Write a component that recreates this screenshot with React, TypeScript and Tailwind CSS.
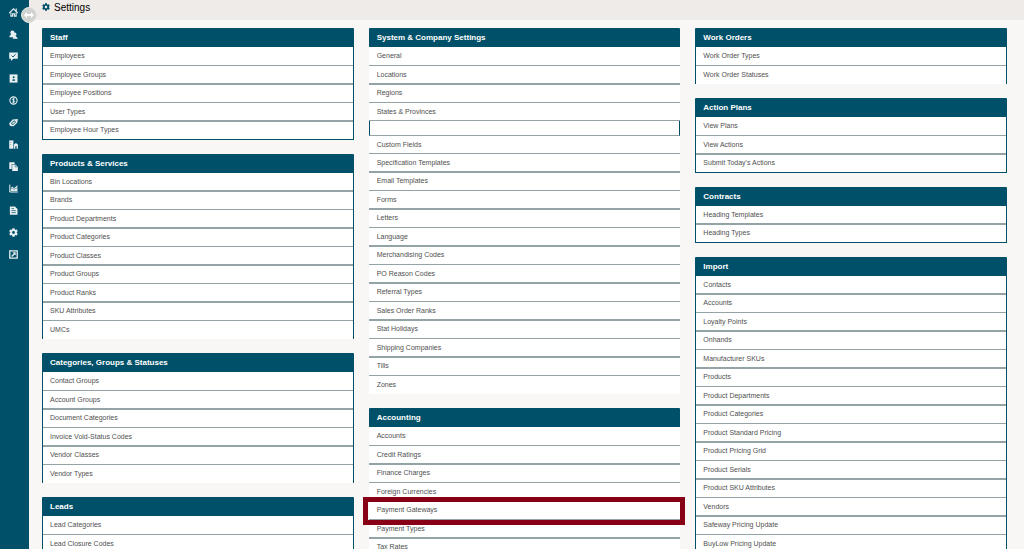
import React from 'react'
import { clsx } from 'clsx'
import { FaCog } from 'react-icons/fa'

interface Group {
  title: string
  items: string[]
  // first separator is the thick one
  thickFirst?: boolean
  sides?: boolean
  closed?: boolean
}

const staff: Group = {
  title: 'Staff',
  items: ['Employees', 'Employee Groups', 'Employee Positions', 'User Types', 'Employee Hour Types'],
  sides: true,
  closed: true,
}

const products: Group = {
  title: 'Products & Services',
  items: [
    'Bin Locations',
    'Brands',
    'Product Departments',
    'Product Categories',
    'Product Classes',
    'Product Groups',
    'Product Ranks',
    'SKU Attributes',
    'UMCs',
  ],
  thickFirst: true,
  sides: true,
}

const categories: Group = {
  title: 'Categories, Groups & Statuses',
  items: [
    'Contact Groups',
    'Account Groups',
    'Document Categories',
    'Invoice Void-Status Codes',
    'Vendor Classes',
    'Vendor Types',
  ],
  sides: true,
}

const leads: Group = {
  title: 'Leads',
  items: ['Lead Categories', 'Lead Closure Codes'],
  sides: true,
}

// the empty entry is a spacer row
const system: Group = {
  title: 'System & Company Settings',
  items: [
    'General',
    'Locations',
    'Regions',
    'States & Provinces',
    '',
    'Custom Fields',
    'Specification Templates',
    'Email Templates',
    'Forms',
    'Letters',
    'Language',
    'Merchandising Codes',
    'PO Reason Codes',
    'Referral Types',
    'Sales Order Ranks',
    'Stat Holidays',
    'Shipping Companies',
    'Tills',
    'Zones',
  ],
}

const accounting: Group = {
  title: 'Accounting',
  items: [
    'Accounts',
    'Credit Ratings',
    'Finance Charges',
    'Foreign Currencies',
    'Payment Gateways',
    'Payment Types',
    'Tax Rates',
  ],
}

const workOrders: Group = {
  title: 'Work Orders',
  items: ['Work Order Types', 'Work Order Statuses'],
  sides: true,
}

const actionPlans: Group = {
  title: 'Action Plans',
  items: ['View Plans', 'View Actions', "Submit Today's Actions"],
  sides: true,
  closed: true,
}

const contracts: Group = {
  title: 'Contracts',
  items: ['Heading Templates', 'Heading Types'],
  thickFirst: true,
  sides: true,
  closed: true,
}

const imports: Group = {
  title: 'Import',
  items: [
    'Contacts',
    'Accounts',
    'Loyalty Points',
    'Onhands',
    'Manufacturer SKUs',
    'Products',
    'Product Departments',
    'Product Categories',
    'Product Standard Pricing',
    'Product Pricing Grid',
    'Product Serials',
    'Product SKU Attributes',
    'Vendors',
    'Safeway Pricing Update',
    'BuyLow Pricing Update',
  ],
  thickFirst: true,
  sides: true,
}

const columns: Group[][] = [
  [staff, products, categories, leads],
  [system, accounting],
  [workOrders, actionPlans, contracts, imports],
]

const highlighted = 'Payment Gateways'

const navItems: { label: string; icon: React.ReactNode }[] = [
  {
    label: 'Home',
    icon: (
      <>
        <path d="M0.3 5 L4.5 0.9 L8.7 5" fill="none" stroke="currentColor" strokeWidth="1.2" />
        <path d="M1.9 4.4 V8.1 H3.6 V5.8 H5.4 V8.1 H7.1 V4.4" fill="none" stroke="currentColor" strokeWidth="1.1" />
        <path d="M6.6 0.6h1.2v2.4h-1.2z" />
      </>
    ),
  },
  {
    label: 'Contacts',
    icon: (
      <>
        <circle cx="3.4" cy="2.4" r="2" />
        <path d="M0.3 7.2 C0.5 5.4 2 5.2 2.3 3.8 H4.6 C4.8 5.2 6 5.4 6 7.2Z" />
        <circle cx="5.8" cy="4.2" r="1.6" />
        <path d="M3.6 8.8 C3.8 7.2 4.8 7 5 5.4 H6.8 C7 7 8.6 7.2 8.9 8.8Z" />
      </>
    ),
  },
  {
    label: 'Messages',
    icon: (
      <>
        <path d="M0.2 0.4 H8.8 V6.8 H4.4 L2 9 V6.8 H0.2Z" />
        <path d="M2.6 3.6 L4 5 L6.6 2.2" fill="none" stroke="#005069" strokeWidth="0.9" />
      </>
    ),
  },
  {
    label: 'Directory',
    icon: (
      <>
        <path d="M0.6 0.4 H8.5 V8.6 H0.6Z" />
        <circle cx="4.7" cy="3.2" r="1" fill="#005069" />
        <path d="M3.3 6.8 V6 C3.3 5 6.1 5 6.1 6 V6.8Z" fill="#005069" />
      </>
    ),
  },
  {
    label: 'Sales',
    icon: (
      <>
        <circle cx="4.5" cy="4.5" r="3.6" fill="none" stroke="currentColor" strokeWidth="1.1" />
        <path
          d="M5.8 3.1 C5 2.3 3.3 2.6 3.4 3.6 C3.5 4.6 5.7 4.3 5.7 5.5 C5.7 6.5 3.8 6.7 3.1 5.8 M4.5 1.8 V7.2"
          fill="none"
          stroke="currentColor"
          strokeWidth="0.9"
        />
      </>
    ),
  },
  {
    label: 'Products',
    icon: (
      <>
        <path d="M0.1 5.4 L3.6 1.4 L8.9 0.9 L8.2 4.8 L4.6 8.3 L1.2 8Z" />
        <ellipse
          cx="4.5"
          cy="4.7"
          rx="2.2"
          ry="1.2"
          transform="rotate(-42 4.5 4.7)"
          fill="none"
          stroke="#005069"
          strokeWidth="0.8"
        />
      </>
    ),
  },
  {
    label: 'Companies',
    icon: (
      <>
        <path d="M0.2 0.4 H4.4 V8.7 H0.2Z" />
        <path d="M5 4.6 L6.9 3 L8.9 4.6 V8.7 H7.6 V6.3 H6.3 V8.7 H5Z" />
        <path d="M1.3 2h1v1h-1zM1.3 4h1v1h-1z" fill="#8fb0bb" />
      </>
    ),
  },
  {
    label: 'Documents',
    icon: (
      <>
        <path d="M0.3 0.3 H5.6 V2 H2.7 V7 H0.3Z" />
        <path d="M3.2 2.5 H6.3 L8.9 4.9 V8.9 H3.2Z" />
        <path d="M6.2 2.6 V5 H8.6" fill="none" stroke="#005069" strokeWidth="0.5" />
      </>
    ),
  },
  {
    label: 'Reports',
    icon: (
      <>
        <path d="M0.8 0.6 V8 H8.8" fill="none" stroke="currentColor" strokeWidth="1" />
        <path d="M1.8 7 V4 L3.4 2.6 L5 4.2 L7 2.4 L8.4 1.2 V7Z" />
        <path d="M1.6 5.2 L3.4 4.2 L5 5.4 L8.4 3.6" fill="none" stroke="#005069" strokeWidth="0.5" />
      </>
    ),
  },
  {
    label: 'Files',
    icon: (
      <>
        <path d="M0.9 0.4 H5.9 L8.5 3 V8.7 H0.9Z" />
        <path d="M2.5 2.6 H5 M2.5 4.6 H6.8 M2.5 6.6 H6.8" fill="none" stroke="#005069" strokeWidth="0.7" />
      </>
    ),
  },
  { label: 'Settings', icon: <FaCog size={9} /> },
  {
    label: 'Open',
    icon: (
      <>
        <path d="M0.8 0.8 H8.2 V8.2 H0.8Z" fill="none" stroke="currentColor" strokeWidth="1.3" />
        <path d="M3.6 2.3 H6.7 V5.4 L5.7 4.4 L3.2 6.9 L2.2 5.9 L4.7 3.4Z" />
      </>
    ),
  },
]

const Sidebar: React.FC = () => (
  <aside className="relative w-[29px] shrink-0 bg-[#005069]">
    <nav className="flex flex-col items-center gap-[13px] pt-2 pr-[3px]">
      {navItems.map((item) => (
        <a key={item.label} href="#" aria-label={item.label} className="block text-[#e8eff1]">
          <svg viewBox="0 0 9 9" className="block size-[9px]" fill="currentColor">
            {item.icon}
          </svg>
        </a>
      ))}
    </nav>
    <button
      type="button"
      aria-label="Toggle menu"
      className="absolute top-[7px] -right-2 z-10 flex size-4 items-center justify-center rounded-full border border-[#e9e7e4] bg-[#cfd2cf]"
    >
      <svg viewBox="0 0 10 6" className="h-[6px] w-[10px] shrink-0" fill="#ffffff">
        <path d="M0 3 L3 0 V2 H7 V0 L10 3 L7 6 V4 H3 V6Z" />
      </svg>
    </button>
  </aside>
)

const SettingsGroup: React.FC<{ group: Group }> = ({ group }) => {
  const { title, items, thickFirst, sides, closed } = group
  const spacer = items.indexOf('')

  const isThick = (index: number) => {
    if (index < 0 || index === items.length - 1) return false
    if (spacer !== -1 && (index === spacer || index === spacer - 1)) return false
    const even = Boolean(thickFirst) || (spacer !== -1 && index > spacer)
    return (index % 2 === 0) === even
  }

  return (
    <section>
      <h2 className="h-[19px] rounded-t-[1px] bg-[#005069] px-2 text-[8px] leading-[19px] font-bold text-white">
        {title}
      </h2>
      <ul className={clsx('bg-white', sides && 'border-x border-[#005069]')}>
        {items.map((item, index) => {
          const last = index === items.length - 1

          if (!item) {
            return <li key={index} className="h-[15px] border-x border-b border-x-[#005069] border-b-[#94a3a5]" />
          }

          return (
            <li
              key={index}
              className={clsx(
                'relative text-[7px] text-[#4f4f4f]',
                sides ? 'px-[7px]' : 'px-2',
                isThick(index) || index === 0 ? 'h-[19px]' : 'h-[18px]',
                isThick(index) ? 'border-b-2' : (!last || closed) && 'border-b',
                last ? 'border-[#005069]' : 'border-[#94a3a5]'
              )}
            >
              <a href="#" className={clsx('block', isThick(index - 1) ? 'leading-[15px]' : 'leading-[17px]')}>
                {item}
              </a>
              {item === highlighted && (
                <div className="pointer-events-none absolute -top-[5px] -right-[5px] -left-[6px] z-10 h-7 border-5 border-[#870016]" />
              )}
            </li>
          )
        })}
      </ul>
    </section>
  )
}

export default function App() {
  return (
    <div className="flex h-screen flex-col bg-white pb-[3px] font-['Liberation_Sans',Arial,sans-serif]">
      <div className="flex min-h-0 flex-1 overflow-hidden">
        <Sidebar />
        <div className="min-w-0 flex-1 bg-[#f8f7f5]">
          <header className="flex h-5 items-start gap-1 bg-[#efebe8] pt-[3px] pl-[13px] text-black">
            <FaCog size={8} color="#005069" />
            <h1 className="text-[10px] leading-[10px]">Settings</h1>
          </header>
          <main className="grid grid-cols-3 items-start gap-[15px] pt-2 pr-[17px] pl-[13px]">
            {columns.map((groups, index) => (
              <div key={index} className="flex flex-col gap-[14px]">
                {groups.map((group) => (
                  <SettingsGroup key={group.title} group={group} />
                ))}
              </div>
            ))}
          </main>
        </div>
      </div>
    </div>
  )
}
